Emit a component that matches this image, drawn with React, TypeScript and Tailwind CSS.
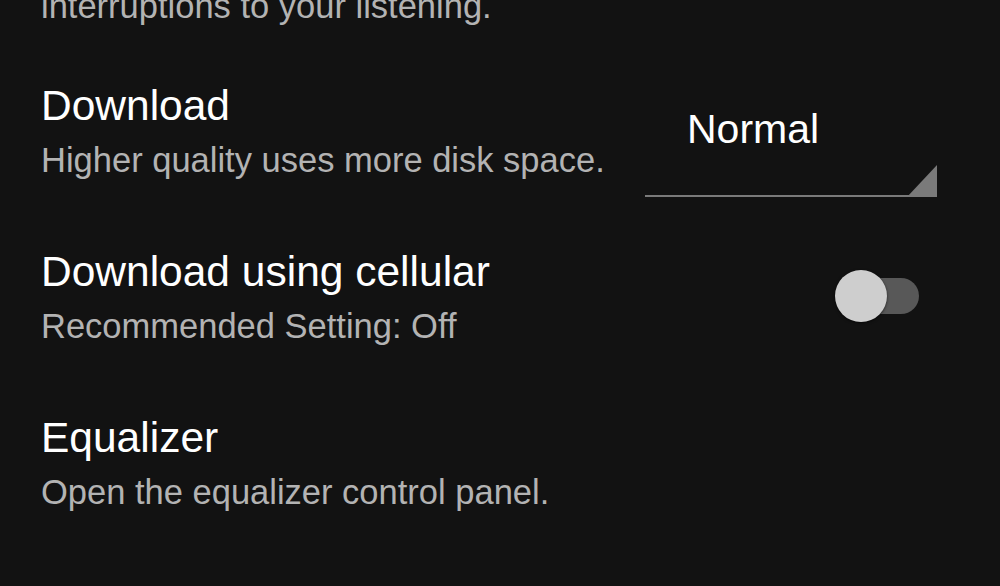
import { useState } from 'react'

function Toggle() {
  const [on, setOn] = useState(false)
  return (
    <button
      onClick={() => setOn(!on)}
      className="relative self-center w-[84px] h-[52px] shrink-0 mr-[18px] -mt-[2px]"
      aria-pressed={on}
    >
      <span className="absolute left-[14px] top-[8px] w-[70px] h-[36px] rounded-full bg-[#585858]"></span>
      <span className="absolute left-0 top-0 w-[52px] h-[52px] rounded-full bg-[#cecece] shadow-[0_1px_3px_rgba(0,0,0,0.6)]"></span>
    </button>
  )
}

function Dropdown() {
  return (
    <div className="relative self-start mt-[23px] -mb-[17px] w-[292px] shrink-0 border-b-2 border-[#7a7a7a] pl-[42px] pb-[42px]">
      <span className="block text-[41px] leading-[48px] text-white">Normal</span>
      <svg className="absolute right-0 bottom-[-2px] w-[30px] h-[32px]" viewBox="0 0 30 32">
        <polygon points="0,32 30,0 30,32" fill="#7a7a7a" />
      </svg>
    </div>
  )
}

function Row({ title, subtitle, control }: { title: string; subtitle: string; control?: React.ReactNode }) {
  return (
    <div className="flex items-start justify-between">
      <div className="flex flex-col">
        <span className="text-[42.5px] leading-[48px] text-white">{title}</span>
        <span className="mt-[10px] text-[34.5px] leading-[40px] text-[#b3b3b3]">{subtitle}</span>
      </div>
      {control}
    </div>
  )
}

export default function App() {
  return (
    <div
      className="w-[1000px] h-[586px] overflow-hidden bg-[#121212] pl-[41px] pr-[63px]"
      style={{ fontFamily: '"Liberation Sans", Arial, sans-serif' }}
    >
      <div className="-mt-[14px] text-[34.5px] leading-[40px] text-[#b3b3b3]">interruptions to your listening.</div>
      <div className="mt-[56px] flex flex-col gap-[68px]">
        <Row title="Download" subtitle="Higher quality uses more disk space." control={<Dropdown />} />
        <Row title="Download using cellular" subtitle="Recommended Setting: Off" control={<Toggle />} />
        <Row title="Equalizer" subtitle="Open the equalizer control panel." />
      </div>
    </div>
  )
}
